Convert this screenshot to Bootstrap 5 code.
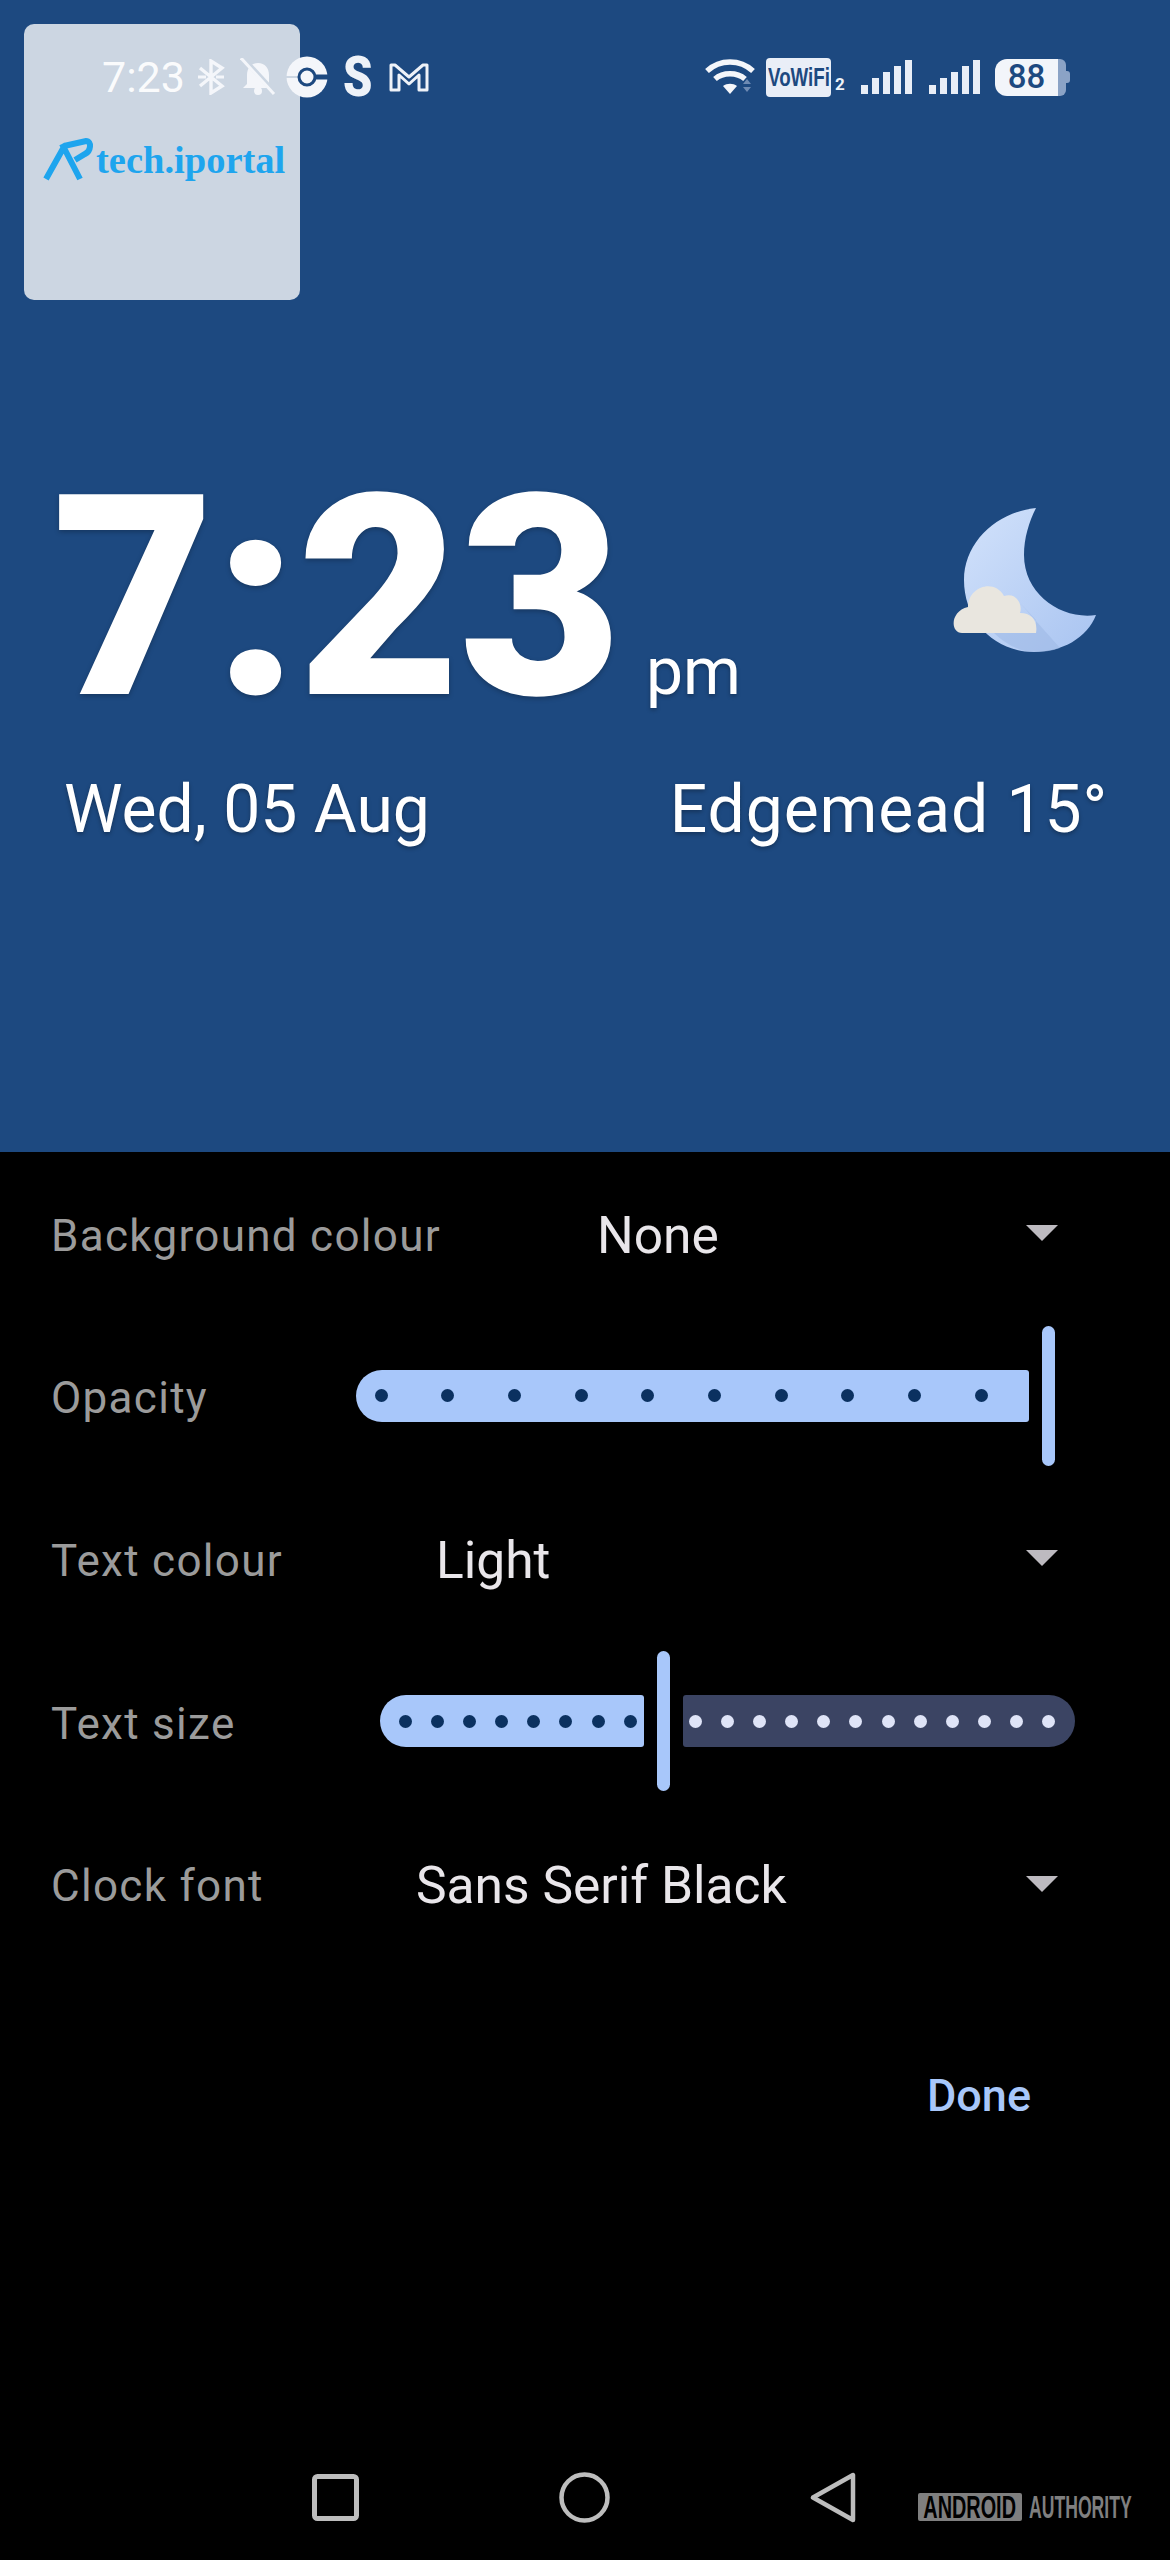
<!DOCTYPE html>
<html lang="en">
<head>
  <meta charset="UTF-8">
  <title>Clock widget settings</title>
  <link href="https://cdn.jsdelivr.net/npm/bootstrap@5.3.0/dist/css/bootstrap.min.css" rel="stylesheet">
  <style>
    body { background: #000; font-family: Roboto, "Liberation Sans", sans-serif; }
    .screen { width: 1170px; height: 2560px; }
    .hero { background: #1d4980; height: 1152px; color: #fff; }
    .logo-tile { position: absolute; left: 24px; top: 24px; width: 276px; height: 276px; background: #ccd6e2; border-radius: 10px; padding: 0 0 4px 16px; }
    .logo-mark { flex: none; }
    .logo-name { font-family: "Liberation Serif", serif; font-weight: 700; font-size: 38.5px; line-height: 1; color: #1ea5ee; margin-left: -6px; }
    .status-row { height: 154px; padding-left: 102px; padding-right: 100px; z-index: 1; }
    .status-time { font-size: 43px; font-weight: 400; line-height: 1; color: rgba(255,255,255,.92); width: 95px; }
    .status-left svg, .status-right svg { display: block; flex: none; }
    .ic-bell { margin-left: 15px; }
    .ic-disc { margin-left: 10px; }
    .ic-s { font-size: 56px; font-weight: 900; line-height: 1; margin-left: 15px; color: #eef2f8; width: 30px; display: inline-block; transform: scaleX(.84); transform-origin: left center; }
    .ic-m { margin-left: 15px; }
    .vowifi { margin-left: 11px; width: 65px; height: 39px; background: #e9eef7; border-radius: 4px; color: #1d4980; font-family: "Liberation Sans", sans-serif; font-weight: 700; font-size: 26px; }
    .vowifi span { display: inline-block; transform: scaleX(.72); white-space: nowrap; }
    .sim-no { font-size: 17px; font-weight: 700; width: 10px; margin: 15px 0 0 4px; color: #eef2f8; line-height: 1; }
    .ic-sig { margin-left: 16px; }
    .batt { margin-left: 14px; width: 63px; height: 37px; background: #f2f5fa; border-radius: 12px 0 0 12px; color: #1d4980; font-size: 33px; font-weight: 500; }
    .batt-end { width: 8px; height: 37px; background: #8ba3c6; border-radius: 0 6px 6px 0; }
    .batt-tip { width: 4px; height: 12px; background: #8ba3c6; border-radius: 0 3px 3px 0; }
    .clock-row { margin-top: 304px; padding-left: 52px; height: 281px; }
    .clock-big { font-size: 281px; font-weight: 900; line-height: 1; letter-spacing: -1px; text-shadow: 0 2px 5px rgba(0,0,0,.25); }
    .clock-ampm { font-size: 66px; line-height: 1; margin-left: 25px; text-shadow: 0 2px 4px rgba(0,0,0,.3); }
    .moon { align-self: flex-start; margin-top: 42px; margin-left: auto; margin-right: 68px; }
    .info-row { margin-top: 38px; padding: 0 62px 0 64px; font-size: 66px; line-height: 1; text-shadow: 0 2px 4px rgba(0,0,0,.3); }
    .info-place { letter-spacing: .9px; }
    .set-row { height: 162.6px; padding-left: 51px; padding-right: 112px; }
    .set-row:first-of-type { margin-top: 2px; }
    .set-label { flex: none; font-size: 44px; letter-spacing: 1.3px; color: #9b9b9b; line-height: 1; padding-top: 5px; }
    .w-none { width: 546px; }
    .w-opacity { width: 304.5px; }
    .w-light { width: 385px; }
    .w-size { width: 329px; }
    .w-font { width: 365px; }
    .set-value { font-size: 51.5px; color: #e9e6ea; line-height: 1; padding-top: 5px; }
    .caret { width: 0; height: 0; border-left: 16px solid transparent; border-right: 16px solid transparent; border-top: 16px solid #bdbac0; margin-left: auto; }
    .track { height: 52px; background: #a8c7fa; align-items: center; display: flex; flex: none; }
    .track i { width: 13px; height: 13px; border-radius: 50%; background: #0b3160; flex: none; display: block; }
    .track-a { width: 673.5px; padding-left: 19px; gap: 53.7px; border-radius: 26px 3px 3px 26px; }
    .track-b { width: 263.5px; padding-left: 19px; gap: 19.1px; border-radius: 26px 3px 3px 26px; }
    .track-c { width: 392px; padding-left: 6.5px; gap: 19.1px; background: #3b4463; border-radius: 3px 26px 26px 3px; }
    .track-c i { background: #dfe4f7; }
    .thumb { width: 13px; height: 140px; background: #a8c7fa; border-radius: 7px; flex: none; }
    .gap-a { margin-left: 13px; }
    .gap-b { margin-left: 13px; margin-right: 13px; }
    .done-row { height: 256px; padding-right: 139px; padding-top: 5px; }
    .done-btn { font-size: 45px; font-weight: 500; color: #a8c7fa; padding: 0; border: 0; line-height: 1; }
    .nav-row { height: 126px; padding-left: 312px; }
    .nav-row svg { flex: none; display: block; }
    .nav-circle { margin-left: 200px; }
    .nav-back { margin-left: 200px; }
    .mark-wrap { margin-left: 62px; margin-top: 20px; color: #7f7f7f; font-family: "Liberation Sans", sans-serif; font-weight: 700; font-size: 32px; line-height: 1; }
    .mark-box { background: #7f7f7f; color: #000; height: 28px; border-radius: 2px; line-height: 28px; width: 104px; flex: none; }
    .mark-box span { display: inline-block; transform: scaleX(.62); white-space: nowrap; }
    .mark-tail { margin-left: 7px; width: 102px; flex: none; }
    .mark-tail span { display: inline-block; transform: scaleX(.55); transform-origin: left center; white-space: nowrap; }
  </style>
</head>
<body>
<div class="screen d-flex flex-column">

  <!-- widget preview -->
  <div class="hero position-relative">
    <div class="logo-tile d-flex align-items-center">
      <svg class="logo-mark" width="62" height="44" viewBox="0 0 62 44">
        <path d="M6 41 L25 7 M22 6 L40 41" stroke="#1ea5ee" stroke-width="6" fill="none"/>
        <path d="M24 8 L46 3 C52 3 51 13 45 16 L35 22" stroke="#1ea5ee" stroke-width="6" fill="none"/>
      </svg>
      <span class="logo-name">tech.iportal</span>
    </div>

    <div class="status-row position-relative d-flex align-items-center justify-content-between">
      <div class="status-left d-flex align-items-center">
        <span class="status-time">7:23</span>
        <svg width="28" height="36" viewBox="0 0 28 36"><path d="M3 9 L25 27 L14 34 V2 L25 9 L3 27" fill="none" stroke="#f4f6fa" stroke-width="3.4"/><path d="M1 18h8M19 18h8" stroke="#f4f6fa" stroke-width="3"/></svg>
        <svg class="ic-bell" width="36" height="38" viewBox="0 0 36 38"><path d="M18 5c-7 0-11 5-11 12v9l-4 4h30l-4-4v-9c0-7-4-12-11-12z" fill="#f4f6fa"/><circle cx="18" cy="33" r="4" fill="#f4f6fa"/><path d="M3 0 L36 36" stroke="#ccd6e2" stroke-width="5"/><path d="M1 0 L34 36" stroke="#f4f6fa" stroke-width="3"/></svg>
        <svg class="ic-disc" width="42" height="42" viewBox="0 0 42 42"><circle cx="21" cy="21" r="20.5" fill="#f4f6fa"/><path d="M26 18.5h16v5H26z" fill="#1d4980"/><path d="M0 20h12v2H0z" fill="#ccd6e2"/><circle cx="21" cy="21" r="8" fill="#f4f6fa" stroke="#1d4980" stroke-width="3"/></svg>
        <span class="ic-s">S</span>
        <svg class="ic-m" width="42" height="30" viewBox="0 0 42 30"><path d="M3 28V3h4l14 12L35 3h4v25h-8V13L21 22 11 13v15z" fill="none" stroke="#eef2f8" stroke-width="3" stroke-linejoin="round"/></svg>
      </div>
      <div class="status-right d-flex align-items-center">
        <svg width="50" height="36" viewBox="0 0 50 36"><path d="M2 12c13-12 33-12 46 0M10 20c8-7 22-7 30 0" fill="none" stroke="#f4f6fa" stroke-width="5.5"/><path d="M18 27c4-3 10-3 14 0L25 35z" fill="#f4f6fa"/><path d="M38 25l4-5 4 5zM38 28l4 5 4-5z" fill="#6f8bb3"/></svg>
        <span class="vowifi d-flex align-items-center justify-content-center"><span>VoWiFi</span></span>
        <span class="sim-no">2</span>
        <svg class="ic-sig" width="52" height="34" viewBox="0 0 52 34"><g fill="#e9eef7"><rect x="0" y="25" width="7" height="9"/><rect x="11" y="18" width="7" height="16"/><rect x="22" y="12" width="7" height="22"/><rect x="33" y="6" width="7" height="28"/><rect x="44" y="0" width="7" height="34"/></g></svg>
        <svg class="ic-sig" width="52" height="34" viewBox="0 0 52 34"><g fill="#e9eef7"><rect x="0" y="25" width="7" height="9"/><rect x="11" y="18" width="7" height="16"/><rect x="22" y="12" width="7" height="22"/><rect x="33" y="6" width="7" height="28"/><rect x="44" y="0" width="7" height="34"/></g></svg>
        <span class="batt d-flex align-items-center justify-content-center">88</span>
        <span class="batt-end"></span>
        <span class="batt-tip"></span>
      </div>
    </div>

    <div class="clock-row d-flex align-items-baseline">
      <span class="clock-big">7:23</span>
      <span class="clock-ampm">pm</span>
      <svg class="moon" width="160" height="160" viewBox="60 30 160 160">
        <defs><linearGradient id="moonFill" x1="0" y1="0" x2="1" y2="1"><stop offset="0" stop-color="#d2e2fb"/><stop offset="1" stop-color="#a9c4f1"/></linearGradient></defs>
        <path d="M154 38C115 42 82 72 82 110C82 150 112 182 152 182C180 182 205 168 214 145C180 150 142 125 142 85C142 68 147 52 154 38Z" fill="url(#moonFill)"/>
        <path d="M138 133L154 150V163H112C124 175 140 182 152 182C160 182 170 181 178 178Z" fill="#9db8e4" opacity=".55"/>
        <path d="M80 163C68 163 68 141 86 137C86 117 112 108 122 126C134 122 141 134 138 143C150 143 156 151 154 163Z" fill="#e9e6df"/>
      </svg>
    </div>

    <div class="info-row d-flex justify-content-between">
      <span>Wed, 05 Aug</span>
      <span class="info-place">Edgemead 15°</span>
    </div>
  </div>

  <!-- settings -->
  <div class="set-row d-flex align-items-center">
    <span class="set-label w-none">Background colour</span>
    <span class="set-value">None</span>
    <span class="caret"></span>
  </div>
  <div class="set-row d-flex align-items-center">
    <span class="set-label w-opacity">Opacity</span>
    <div class="track track-a"><i></i><i></i><i></i><i></i><i></i><i></i><i></i><i></i><i></i><i></i></div>
    <span class="thumb gap-a"></span>
  </div>
  <div class="set-row d-flex align-items-center">
    <span class="set-label w-light">Text colour</span>
    <span class="set-value">Light</span>
    <span class="caret"></span>
  </div>
  <div class="set-row d-flex align-items-center">
    <span class="set-label w-size">Text size</span>
    <div class="track track-b"><i></i><i></i><i></i><i></i><i></i><i></i><i></i><i></i></div>
    <span class="thumb gap-b"></span>
    <div class="track track-c"><i></i><i></i><i></i><i></i><i></i><i></i><i></i><i></i><i></i><i></i><i></i><i></i></div>
  </div>
  <div class="set-row d-flex align-items-center">
    <span class="set-label w-font">Clock font</span>
    <span class="set-value">Sans Serif Black</span>
    <span class="caret"></span>
  </div>

  <div class="done-row d-flex align-items-center justify-content-end">
    <button type="button" class="btn done-btn">Done</button>
  </div>

  <!-- nav bar -->
  <div class="nav-row mt-auto d-flex align-items-center">
    <svg width="47" height="47" viewBox="0 0 47 47"><rect x="2.5" y="2.5" width="42" height="42" rx="3" fill="none" stroke="#bdbdbd" stroke-width="5"/></svg>
    <svg class="nav-circle" width="51" height="51" viewBox="0 0 51 51"><circle cx="25.5" cy="25.5" r="23" fill="none" stroke="#bdbdbd" stroke-width="4.5"/></svg>
    <svg class="nav-back" width="46" height="51" viewBox="0 0 46 51"><path d="M43 3V48L3 25.5Z" fill="none" stroke="#bdbdbd" stroke-width="4.5" stroke-linejoin="round"/></svg>
    <div class="mark-wrap d-flex align-items-center">
      <span class="mark-box d-flex justify-content-center"><span>ANDROID</span></span>
      <span class="mark-tail"><span>AUTHORITY</span></span>
    </div>
  </div>
</div>
<script src="https://cdn.jsdelivr.net/npm/bootstrap@5.3.0/dist/js/bootstrap.bundle.min.js"></script>
</body>
</html>
